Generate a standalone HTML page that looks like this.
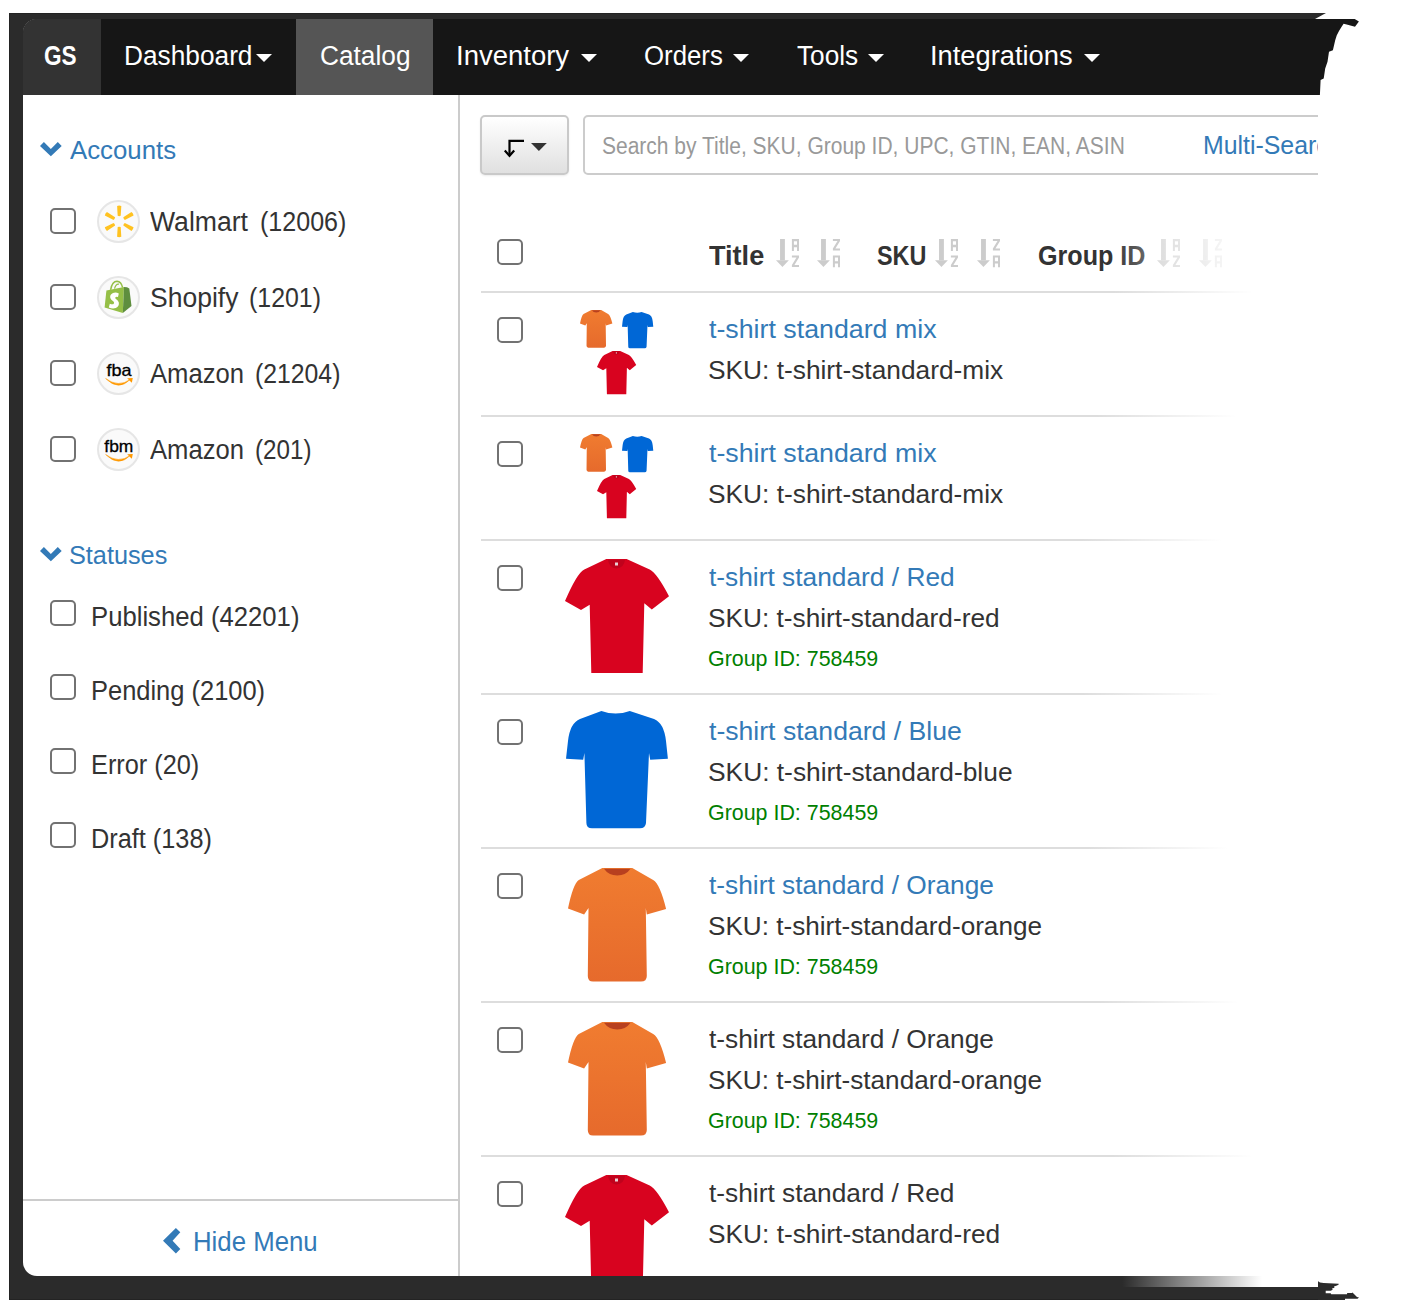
<!DOCTYPE html>
<html><head><meta charset="utf-8"><style>
html,body{margin:0;padding:0;}
body{width:1401px;height:1306px;position:relative;overflow:hidden;background:#fff;font-family:"Liberation Sans",sans-serif;}
.t{position:absolute;white-space:nowrap;transform-origin:0 0;}
.cb{position:absolute;border:2px solid #727272;border-radius:5px;background:#fff;}
.logo{position:absolute;width:39px;height:39px;border:2px solid #e6e6e6;border-radius:50%;background:#fafafa;}
.btn{position:absolute;border:2px solid #c9c9c9;border-radius:5px;background:linear-gradient(#fff,#e0e0e0);box-shadow:0 1px 2px rgba(0,0,0,.08);}
svg{overflow:visible}
</style></head><body>
<div style="position:absolute;left:9px;top:13px;width:1306px;height:1287px;background:#2b2b2b;box-shadow:inset 0 0 0 1px #232323"></div>
<div id="content" style="position:absolute;left:23px;top:19px;width:1295px;height:1257px;background:#fff;border-radius:14px 0 0 14px;overflow:hidden">
<div style="position:absolute;left:0;top:0;width:1295px;height:76px;background:#161616"></div>
<div style="position:absolute;left:0;top:0;width:78px;height:76px;background:#333"></div>
<div style="position:absolute;left:273px;top:0;width:137px;height:76px;background:#555"></div>
</div>
<svg width="0" height="0" style="position:absolute"><defs><linearGradient id="og" x1="0" y1="0" x2="0" y2="1"><stop offset="0" stop-color="#f07c30"/><stop offset="1" stop-color="#e66a2c"/></linearGradient></defs></svg>
<svg style="position:absolute;left:0;top:0" width="1401" height="1306">
<polygon fill="#2b2b2b" points="1300,13 1326,13 1315,19 1300,19"/>
<polygon fill="#161616" points="1300,19 1354.7,19 1358.9,21.5 1355,26.8 1351.3,25.7 1346.7,24.5 1343.6,23.8 1341.3,27.2 1339,31 1336.7,35.6 1335.2,40.2 1332.9,50.2 1329,51.7 1327.5,61.7 1325.2,68.6 1323.7,78.5 1320.6,80 1319.9,95 1300,95"/>
<polygon fill="#2b2b2b" points="1300,1276 1317.7,1276 1317.7,1281 1320,1282.5 1323.7,1283 1338.7,1283.7 1338.7,1284.5 1337,1285.5 1334,1286.5 1334.5,1287.7 1332,1288.5 1332.7,1289.7 1330.7,1290.7 1325.7,1290.7 1325.7,1293.2 1330.7,1293.2 1331.2,1294.2 1347,1294.2 1347.2,1293 1352.2,1293 1352.2,1292.2 1357,1297 1359,1297.5 1357.5,1298.7 1345,1298.7 1345,1300 1300,1300"/>
</svg>
<div class="t" id="t0" style="left:43.96px;top:43.22px;font-size:27px;line-height:27px;font-weight:700;color:#fff;transform:scaleX(0.8374);">GS</div>
<div class="t" id="t1" style="left:123.94px;top:42.88px;font-size:27px;line-height:27px;font-weight:400;color:#fff;transform:scaleX(0.9727);">Dashboard</div>
<div class="t" id="t2" style="left:319.97px;top:42.88px;font-size:27px;line-height:27px;font-weight:400;color:#fff;transform:scaleX(0.9727);">Catalog</div>
<div class="t" id="t3" style="left:455.97px;top:42.88px;font-size:27px;line-height:27px;font-weight:400;color:#fff;transform:scaleX(1.0182);">Inventory</div>
<div class="t" id="t4" style="left:643.79px;top:42.88px;font-size:27px;line-height:27px;font-weight:400;color:#fff;transform:scaleX(0.9555);">Orders</div>
<div class="t" id="t5" style="left:797.40px;top:42.88px;font-size:27px;line-height:27px;font-weight:400;color:#fff;transform:scaleX(0.9715);">Tools</div>
<div class="t" id="t6" style="left:930.36px;top:42.88px;font-size:27px;line-height:27px;font-weight:400;color:#fff;transform:scaleX(1.0108);">Integrations</div>
<svg style="position:absolute;left:256px;top:53.8px" width="16" height="8"><polygon fill="#fff" points="0,0 16,0 8.0,8"/></svg>
<svg style="position:absolute;left:580.5px;top:53.8px" width="16" height="8"><polygon fill="#fff" points="0,0 16,0 8.0,8"/></svg>
<svg style="position:absolute;left:732.8px;top:53.8px" width="16" height="8"><polygon fill="#fff" points="0,0 16,0 8.0,8"/></svg>
<svg style="position:absolute;left:868px;top:53.8px" width="16" height="8"><polygon fill="#fff" points="0,0 16,0 8.0,8"/></svg>
<svg style="position:absolute;left:1084px;top:53.8px" width="16" height="8"><polygon fill="#fff" points="0,0 16,0 8.0,8"/></svg>
<div style="position:absolute;left:458px;top:95px;width:2px;height:1181px;background:#ccc"></div>
<div style="position:absolute;left:23px;top:1199px;width:435px;height:2px;background:#ccc"></div>
<svg style="position:absolute;left:40px;top:141.6px" width="22" height="15"><polygon fill="#337ab7" points="0,3.9 3.9,0 10.85,6.9 17.8,0 21.7,3.9 10.85,14.2"/></svg>
<div class="t" id="t7" style="left:69.80px;top:136.93px;font-size:26px;line-height:26px;font-weight:400;color:#337ab7;transform:scaleX(0.9925);">Accounts</div>
<svg style="position:absolute;left:40px;top:546.6px" width="22" height="15"><polygon fill="#337ab7" points="0,3.9 3.9,0 10.85,6.9 17.8,0 21.7,3.9 10.85,14.2"/></svg>
<div class="t" id="t8" style="left:68.98px;top:541.67px;font-size:26px;line-height:26px;font-weight:400;color:#337ab7;transform:scaleX(0.9712);">Statuses</div>
<div class="cb" style="left:50px;top:208px;width:22px;height:22px"></div>
<div class="t" id="t9" style="left:150.40px;top:208.88px;font-size:27px;line-height:27px;font-weight:400;color:#333;transform:scaleX(0.9849);">Walmart</div>
<div class="t" id="t10" style="left:259.79px;top:208.88px;font-size:27px;line-height:27px;font-weight:400;color:#333;transform:scaleX(0.9281);">(12006)</div>
<div class="logo" style="left:96.5px;top:199.5px"></div>
<div class="cb" style="left:50px;top:284px;width:22px;height:22px"></div>
<div class="t" id="t11" style="left:149.99px;top:284.88px;font-size:27px;line-height:27px;font-weight:400;color:#333;transform:scaleX(0.9822);">Shopify</div>
<div class="t" id="t12" style="left:249.35px;top:284.88px;font-size:27px;line-height:27px;font-weight:400;color:#333;transform:scaleX(0.9216);">(1201)</div>
<div class="logo" style="left:96.5px;top:275.5px"></div>
<div class="cb" style="left:50px;top:360px;width:22px;height:22px"></div>
<div class="t" id="t13" style="left:150.40px;top:360.88px;font-size:27px;line-height:27px;font-weight:400;color:#333;transform:scaleX(0.9496);">Amazon</div>
<div class="t" id="t14" style="left:255.36px;top:360.88px;font-size:27px;line-height:27px;font-weight:400;color:#333;transform:scaleX(0.9177);">(21204)</div>
<div class="logo" style="left:96.5px;top:351.5px"></div>
<div class="cb" style="left:50px;top:436px;width:22px;height:22px"></div>
<div class="t" id="t15" style="left:150.40px;top:436.88px;font-size:27px;line-height:27px;font-weight:400;color:#333;transform:scaleX(0.9496);">Amazon</div>
<div class="t" id="t16" style="left:255.36px;top:436.88px;font-size:27px;line-height:27px;font-weight:400;color:#333;transform:scaleX(0.8962);">(201)</div>
<div class="logo" style="left:96.5px;top:427.5px"></div>
<svg style="position:absolute;left:96.5px;top:199.5px" width="43" height="43" viewBox="0 0 43 43"><g fill="#ffc220" transform="translate(22.2,21.4)"><path d="M-2.1,-15.4 Q0,-16.2 2.1,-15.4 L1.5,-5.6 Q0,-4.9 -1.5,-5.6 Z" transform="rotate(0)"/><path d="M-2.1,-15.4 Q0,-16.2 2.1,-15.4 L1.5,-5.6 Q0,-4.9 -1.5,-5.6 Z" transform="rotate(60)"/><path d="M-2.1,-15.4 Q0,-16.2 2.1,-15.4 L1.5,-5.6 Q0,-4.9 -1.5,-5.6 Z" transform="rotate(120)"/><path d="M-2.1,-15.4 Q0,-16.2 2.1,-15.4 L1.5,-5.6 Q0,-4.9 -1.5,-5.6 Z" transform="rotate(180)"/><path d="M-2.1,-15.4 Q0,-16.2 2.1,-15.4 L1.5,-5.6 Q0,-4.9 -1.5,-5.6 Z" transform="rotate(240)"/><path d="M-2.1,-15.4 Q0,-16.2 2.1,-15.4 L1.5,-5.6 Q0,-4.9 -1.5,-5.6 Z" transform="rotate(300)"/></g></svg>
<svg style="position:absolute;left:96.5px;top:275.5px" width="43" height="43" viewBox="0 0 43 43">
<path fill="none" stroke="#95bf47" stroke-width="1.5" d="M13.6,13.8 Q15.2,5.3 20,5.3 Q24.2,5.6 25.6,11.5"/>
<path fill="none" stroke="#95bf47" stroke-width="1.2" d="M17.5,12.6 Q19,7.5 22,8.2"/>
<path fill="#95bf47" d="M9.4,14.6 L27,11 L25.8,36.9 L7.6,31.6 Z"/>
<path fill="#5e8e3e" d="M27,11 L30,11.2 L32.3,12.4 L34.5,30 L25.8,36.9 Z"/>
<path fill="#fff" d="M21.8,17.4 Q19,15.9 16,16.9 Q12.5,18.4 13.3,21.9 Q13.9,23.9 16.2,25.3 Q17.6,26.3 16.8,27.7 Q15.6,28.9 12.8,27.7 L11.8,31.5 Q15.5,33.3 18.8,32.1 Q22.5,30.4 21.8,26.6 Q21.4,24.6 19,23.1 Q17.8,22.3 18.4,21.2 Q19.2,20.3 21,21.1 Z"/>
</svg>
<svg style="position:absolute;left:96.5px;top:351.5px" width="43" height="43" viewBox="0 0 43 43">
<text x="9.4" y="23.6" font-family="Liberation Sans" font-size="16.5" textLength="25.1" lengthAdjust="spacingAndGlyphs" fill="#000" stroke="#000" stroke-width="0.3">fba</text>
<path fill="#ff9900" stroke="#ff9900" stroke-width="0.5" d="M8.6,26.5 Q21.5,39.5 33.2,27.4 Q21.5,36 8.6,26.5 Z"/>
<path fill="#ff9900" d="M30.2,26.2 L35.8,26.1 L34.8,30.8 Z"/>
</svg>
<svg style="position:absolute;left:96.5px;top:427.5px" width="43" height="43" viewBox="0 0 43 43">
<text x="7.3" y="23.6" font-family="Liberation Sans" font-size="16.5" textLength="28.999999999999996" lengthAdjust="spacingAndGlyphs" fill="#000" stroke="#000" stroke-width="0.3">fbm</text>
<path fill="#ff9900" stroke="#ff9900" stroke-width="0.5" d="M8.6,26.5 Q21.5,39.5 33.2,27.4 Q21.5,36 8.6,26.5 Z"/>
<path fill="#ff9900" d="M30.2,26.2 L35.8,26.1 L34.8,30.8 Z"/>
</svg>
<div class="cb" style="left:50px;top:600.0px;width:22px;height:22px"></div>
<div class="t" id="t17" style="left:90.97px;top:604.28px;font-size:27px;line-height:27px;font-weight:400;color:#333;transform:scaleX(0.9512);">Published (42201)</div>
<div class="cb" style="left:50px;top:674.1px;width:22px;height:22px"></div>
<div class="t" id="t18" style="left:90.95px;top:678.28px;font-size:27px;line-height:27px;font-weight:400;color:#333;transform:scaleX(0.9429);">Pending (2100)</div>
<div class="cb" style="left:50px;top:748.2px;width:22px;height:22px"></div>
<div class="t" id="t19" style="left:90.94px;top:752.28px;font-size:27px;line-height:27px;font-weight:400;color:#333;transform:scaleX(0.9374);">Error (20)</div>
<div class="cb" style="left:50px;top:822.3px;width:22px;height:22px"></div>
<div class="t" id="t20" style="left:90.94px;top:826.28px;font-size:27px;line-height:27px;font-weight:400;color:#333;transform:scaleX(0.9370);">Draft (138)</div>
<svg style="position:absolute;left:162.9px;top:1227.5px" width="18" height="26"><polygon fill="#337ab7" points="12.9,0 17.3,4.3 9.6,12.7 17.3,21.1 12.9,25.4 0,12.7"/></svg>
<div class="t" id="t21" style="left:193.35px;top:1229.07px;font-size:27px;line-height:27px;font-weight:400;color:#337ab7;transform:scaleX(0.9546);">Hide Menu</div>
<div class="btn" style="left:480px;top:115px;width:85px;height:56px"></div>
<svg style="position:absolute;left:500px;top:136px" width="50" height="24">
<path fill="none" stroke="#000" stroke-width="2.2" d="M24,4.8 H9.5 V19.5"/>
<path fill="none" stroke="#000" stroke-width="2.2" d="M4.8,14.5 L9.5,19.8 L14.2,14.5"/>
<polygon fill="#333" points="31,7 46.8,7 38.9,15"/>
</svg>
<div style="position:absolute;left:583px;top:115px;width:800px;height:56px;border:2px solid #ccc;border-radius:5px;background:#fff"></div>
<div class="t" id="t22" style="left:601.59px;top:135.27px;font-size:23px;line-height:23px;font-weight:400;color:#999;transform:scaleX(0.9130);">Search by Title, SKU, Group ID, UPC, GTIN, EAN, ASIN</div>
<div class="t" id="t23" style="left:1202.76px;top:132.12px;font-size:26px;line-height:26px;font-weight:400;color:#337ab7;transform:scaleX(0.9560);">Multi-Search</div>
<div class="cb" style="left:497px;top:239.3px;width:22px;height:22px"></div>
<div class="t" id="t24" style="left:709.20px;top:242.88px;font-size:27px;line-height:27px;font-weight:700;color:#333;transform:scaleX(1.0037);">Title</div>
<div class="t" id="t25" style="left:877.39px;top:242.62px;font-size:27px;line-height:27px;font-weight:700;color:#333;transform:scaleX(0.8672);">SKU</div>
<div class="t" id="t26" style="left:1038.39px;top:242.62px;font-size:27px;line-height:27px;font-weight:700;color:#333;transform:scaleX(0.9300);">Group ID</div>
<svg style="position:absolute;left:775.9px;top:239px" width="24" height="28"><g fill="#ccc"><rect x="4.06" y="0" width="4.84" height="21.4"/><polygon points="0,21.2 12.85,21.2 6.47,27.9"/><path fill-rule="evenodd" d="M15.9,11.9 V0 H23 V11.9 H21 V8.2 H17.9 V11.9 Z M17.9,2.2 H21 V5.8 H17.9 Z"/><path d="M15.9,16.4 H23 V18.4 L18.4,25.9 H23 V27.9 H15.9 V25.9 L20.5,18.4 H15.9 Z"/></g></svg>
<svg style="position:absolute;left:817.3px;top:239px" width="24" height="28"><g fill="#ccc"><rect x="4.06" y="0" width="4.84" height="21.4"/><polygon points="0,21.2 12.85,21.2 6.47,27.9"/><path d="M15.9,0 H23 V2 L18.4,9.5 H23 V11.5 H15.9 V9.5 L20.5,2 H15.9 Z"/><path fill-rule="evenodd" d="M15.9,28.299999999999997 V16.4 H23 V28.299999999999997 H21 V24.599999999999998 H17.9 V28.299999999999997 Z M17.9,18.599999999999998 H21 V22.2 H17.9 Z"/></g></svg>
<svg style="position:absolute;left:934.7px;top:239px" width="24" height="28"><g fill="#ccc"><rect x="4.06" y="0" width="4.84" height="21.4"/><polygon points="0,21.2 12.85,21.2 6.47,27.9"/><path fill-rule="evenodd" d="M15.9,11.9 V0 H23 V11.9 H21 V8.2 H17.9 V11.9 Z M17.9,2.2 H21 V5.8 H17.9 Z"/><path d="M15.9,16.4 H23 V18.4 L18.4,25.9 H23 V27.9 H15.9 V25.9 L20.5,18.4 H15.9 Z"/></g></svg>
<svg style="position:absolute;left:976.7px;top:239px" width="24" height="28"><g fill="#ccc"><rect x="4.06" y="0" width="4.84" height="21.4"/><polygon points="0,21.2 12.85,21.2 6.47,27.9"/><path d="M15.9,0 H23 V2 L18.4,9.5 H23 V11.5 H15.9 V9.5 L20.5,2 H15.9 Z"/><path fill-rule="evenodd" d="M15.9,28.299999999999997 V16.4 H23 V28.299999999999997 H21 V24.599999999999998 H17.9 V28.299999999999997 Z M17.9,18.599999999999998 H21 V22.2 H17.9 Z"/></g></svg>
<svg style="position:absolute;left:1156.8px;top:239px" width="24" height="28"><g fill="#ccc"><rect x="4.06" y="0" width="4.84" height="21.4"/><polygon points="0,21.2 12.85,21.2 6.47,27.9"/><path fill-rule="evenodd" d="M15.9,11.9 V0 H23 V11.9 H21 V8.2 H17.9 V11.9 Z M17.9,2.2 H21 V5.8 H17.9 Z"/><path d="M15.9,16.4 H23 V18.4 L18.4,25.9 H23 V27.9 H15.9 V25.9 L20.5,18.4 H15.9 Z"/></g></svg>
<svg style="position:absolute;left:1198.7px;top:239px" width="24" height="28"><g fill="#ccc"><rect x="4.06" y="0" width="4.84" height="21.4"/><polygon points="0,21.2 12.85,21.2 6.47,27.9"/><path d="M15.9,0 H23 V2 L18.4,9.5 H23 V11.5 H15.9 V9.5 L20.5,2 H15.9 Z"/><path fill-rule="evenodd" d="M15.9,28.299999999999997 V16.4 H23 V28.299999999999997 H21 V24.599999999999998 H17.9 V28.299999999999997 Z M17.9,18.599999999999998 H21 V22.2 H17.9 Z"/></g></svg>
<div style="position:absolute;left:481px;top:291px;width:837px;height:2px;background:#ddd"></div>
<div style="position:absolute;left:481px;top:415px;width:837px;height:2px;background:#ddd"></div>
<div style="position:absolute;left:481px;top:539px;width:837px;height:2px;background:#ddd"></div>
<div style="position:absolute;left:481px;top:693px;width:837px;height:2px;background:#ddd"></div>
<div style="position:absolute;left:481px;top:847px;width:837px;height:2px;background:#ddd"></div>
<div style="position:absolute;left:481px;top:1001px;width:837px;height:2px;background:#ddd"></div>
<div style="position:absolute;left:481px;top:1155px;width:837px;height:2px;background:#ddd"></div>
<div class="cb" style="left:497px;top:317px;width:22px;height:22px"></div>
<div class="cb" style="left:497px;top:441px;width:22px;height:22px"></div>
<div class="cb" style="left:497px;top:565px;width:22px;height:22px"></div>
<div class="cb" style="left:497px;top:719px;width:22px;height:22px"></div>
<div class="cb" style="left:497px;top:873px;width:22px;height:22px"></div>
<div class="cb" style="left:497px;top:1027px;width:22px;height:22px"></div>
<div class="cb" style="left:497px;top:1181px;width:22px;height:22px"></div>
<svg style="position:absolute;left:579.7px;top:310.3px" width="33.4" height="38.7"><g transform="scale(0.33,0.332)"><path fill="url(#og)" d="M34.3,0 L64.3,0 L85.2,12 Q92,16 98.1,41 L78.8,46.5 L77.8,40 L78.8,108 Q78.8,113.5 73,113.5 L25,113.5 Q19.8,113.5 19.8,108 L20.5,40 L16.1,46.5 L0,40.6 Q5,16 10.8,12 Z"/><path d="M36,0.8 L62.5,0.8 Q58,7.5 49.3,7.5 Q40.5,7.5 36,0.8 Z" fill="#b8401f"/></g></svg>
<svg style="position:absolute;left:621.7px;top:311.6px" width="32.3" height="37.4"><g transform="scale(0.307,0.31)"><path fill="#0067d6" d="M35.4,0 Q49.6,5 63.8,0 L88,8 Q98,12 100,30 L101.9,47.7 L84.2,48.7 L83,42 L80,112 Q79.4,117.3 74,117.3 L26,117.3 Q20.4,117.3 20.4,112 L18.4,42 L17.2,48.7 L0,47.7 L2,30 Q4,12 14,8 Z"/></g></svg>
<svg style="position:absolute;left:597.3px;top:351.4px" width="40.2" height="44.2"><g transform="scale(0.377,0.379)"><path fill="#d8031f" d="M41.3,0 L61.6,0 L84.7,10.4 Q92,14 104,37.2 L86.8,50.6 L79.3,44.2 L77.7,113.9 L26.3,113.9 L24.7,45.8 L16,51.1 L0,42 Q12,14 19.3,10.4 Z"/><path d="M43,0.8 L60,0.8 Q59,9 51.5,9.5 Q44,9 43,0.8 Z" fill="#c0021c"/><rect x="50" y="3.5" width="3" height="3" fill="#e8d0d4"/></g></svg>
<svg style="position:absolute;left:579.7px;top:434.3px" width="33.4" height="38.7"><g transform="scale(0.33,0.332)"><path fill="url(#og)" d="M34.3,0 L64.3,0 L85.2,12 Q92,16 98.1,41 L78.8,46.5 L77.8,40 L78.8,108 Q78.8,113.5 73,113.5 L25,113.5 Q19.8,113.5 19.8,108 L20.5,40 L16.1,46.5 L0,40.6 Q5,16 10.8,12 Z"/><path d="M36,0.8 L62.5,0.8 Q58,7.5 49.3,7.5 Q40.5,7.5 36,0.8 Z" fill="#b8401f"/></g></svg>
<svg style="position:absolute;left:621.7px;top:435.6px" width="32.3" height="37.4"><g transform="scale(0.307,0.31)"><path fill="#0067d6" d="M35.4,0 Q49.6,5 63.8,0 L88,8 Q98,12 100,30 L101.9,47.7 L84.2,48.7 L83,42 L80,112 Q79.4,117.3 74,117.3 L26,117.3 Q20.4,117.3 20.4,112 L18.4,42 L17.2,48.7 L0,47.7 L2,30 Q4,12 14,8 Z"/></g></svg>
<svg style="position:absolute;left:597.3px;top:475.4px" width="40.2" height="44.2"><g transform="scale(0.377,0.379)"><path fill="#d8031f" d="M41.3,0 L61.6,0 L84.7,10.4 Q92,14 104,37.2 L86.8,50.6 L79.3,44.2 L77.7,113.9 L26.3,113.9 L24.7,45.8 L16,51.1 L0,42 Q12,14 19.3,10.4 Z"/><path d="M43,0.8 L60,0.8 Q59,9 51.5,9.5 Q44,9 43,0.8 Z" fill="#c0021c"/><rect x="50" y="3.5" width="3" height="3" fill="#e8d0d4"/></g></svg>
<svg style="position:absolute;left:565px;top:559.4px" width="105.0" height="115.0"><g transform="scale(1.0,1.0)"><path fill="#d8031f" d="M41.3,0 L61.6,0 L84.7,10.4 Q92,14 104,37.2 L86.8,50.6 L79.3,44.2 L77.7,113.9 L26.3,113.9 L24.7,45.8 L16,51.1 L0,42 Q12,14 19.3,10.4 Z"/><path d="M43,0.8 L60,0.8 Q59,9 51.5,9.5 Q44,9 43,0.8 Z" fill="#c0021c"/><rect x="50" y="3.5" width="3" height="3" fill="#e8d0d4"/></g></svg>
<svg style="position:absolute;left:566px;top:711.3px" width="103.0" height="118.3"><g transform="scale(1.0,1.0)"><path fill="#0067d6" d="M35.4,0 Q49.6,5 63.8,0 L88,8 Q98,12 100,30 L101.9,47.7 L84.2,48.7 L83,42 L80,112 Q79.4,117.3 74,117.3 L26,117.3 Q20.4,117.3 20.4,112 L18.4,42 L17.2,48.7 L0,47.7 L2,30 Q4,12 14,8 Z"/></g></svg>
<svg style="position:absolute;left:568.2px;top:868px" width="99.1" height="114.5"><g transform="scale(1.0,1.0)"><path fill="url(#og)" d="M34.3,0 L64.3,0 L85.2,12 Q92,16 98.1,41 L78.8,46.5 L77.8,40 L78.8,108 Q78.8,113.5 73,113.5 L25,113.5 Q19.8,113.5 19.8,108 L20.5,40 L16.1,46.5 L0,40.6 Q5,16 10.8,12 Z"/><path d="M36,0.8 L62.5,0.8 Q58,7.5 49.3,7.5 Q40.5,7.5 36,0.8 Z" fill="#b8401f"/></g></svg>
<svg style="position:absolute;left:568.2px;top:1022px" width="99.1" height="114.5"><g transform="scale(1.0,1.0)"><path fill="url(#og)" d="M34.3,0 L64.3,0 L85.2,12 Q92,16 98.1,41 L78.8,46.5 L77.8,40 L78.8,108 Q78.8,113.5 73,113.5 L25,113.5 Q19.8,113.5 19.8,108 L20.5,40 L16.1,46.5 L0,40.6 Q5,16 10.8,12 Z"/><path d="M36,0.8 L62.5,0.8 Q58,7.5 49.3,7.5 Q40.5,7.5 36,0.8 Z" fill="#b8401f"/></g></svg>
<svg style="position:absolute;left:565px;top:1175.4px" width="105.0" height="115.0"><g transform="scale(1.0,1.0)"><path fill="#d8031f" d="M41.3,0 L61.6,0 L84.7,10.4 Q92,14 104,37.2 L86.8,50.6 L79.3,44.2 L77.7,113.9 L26.3,113.9 L24.7,45.8 L16,51.1 L0,42 Q12,14 19.3,10.4 Z"/><path d="M43,0.8 L60,0.8 Q59,9 51.5,9.5 Q44,9 43,0.8 Z" fill="#c0021c"/><rect x="50" y="3.5" width="3" height="3" fill="#e8d0d4"/></g></svg>
<div class="t" id="t27" style="left:709.40px;top:316.12px;font-size:26px;line-height:26px;font-weight:400;color:#337ab7;transform:scaleX(1.0293);">t-shirt standard mix</div>
<div class="t" id="t28" style="left:708.40px;top:356.73px;font-size:26px;line-height:26px;font-weight:400;color:#333;transform:scaleX(1.0114);">SKU: t-shirt-standard-mix</div>
<div class="t" id="t29" style="left:709.40px;top:440.12px;font-size:26px;line-height:26px;font-weight:400;color:#337ab7;transform:scaleX(1.0293);">t-shirt standard mix</div>
<div class="t" id="t30" style="left:708.40px;top:480.73px;font-size:26px;line-height:26px;font-weight:400;color:#333;transform:scaleX(1.0114);">SKU: t-shirt-standard-mix</div>
<div class="t" id="t31" style="left:709.40px;top:564.12px;font-size:26px;line-height:26px;font-weight:400;color:#337ab7;transform:scaleX(1.0118);">t-shirt standard / Red</div>
<div class="t" id="t32" style="left:708.39px;top:604.72px;font-size:26px;line-height:26px;font-weight:400;color:#333;transform:scaleX(1.0090);">SKU: t-shirt-standard-red</div>
<div class="t" id="t33" style="left:708.39px;top:647.53px;font-size:22px;line-height:22px;font-weight:400;color:#008000;transform:scaleX(0.9733);">Group ID: 758459</div>
<div class="t" id="t34" style="left:709.40px;top:718.12px;font-size:26px;line-height:26px;font-weight:400;color:#337ab7;transform:scaleX(1.0229);">t-shirt standard / Blue</div>
<div class="t" id="t35" style="left:708.39px;top:758.72px;font-size:26px;line-height:26px;font-weight:400;color:#333;transform:scaleX(1.0132);">SKU: t-shirt-standard-blue</div>
<div class="t" id="t36" style="left:708.39px;top:801.53px;font-size:22px;line-height:22px;font-weight:400;color:#008000;transform:scaleX(0.9733);">Group ID: 758459</div>
<div class="t" id="t37" style="left:709.40px;top:872.12px;font-size:26px;line-height:26px;font-weight:400;color:#337ab7;transform:scaleX(1.0111);">t-shirt standard / Orange</div>
<div class="t" id="t38" style="left:708.39px;top:912.72px;font-size:26px;line-height:26px;font-weight:400;color:#333;transform:scaleX(1.0049);">SKU: t-shirt-standard-orange</div>
<div class="t" id="t39" style="left:708.39px;top:955.53px;font-size:22px;line-height:22px;font-weight:400;color:#008000;transform:scaleX(0.9733);">Group ID: 758459</div>
<div class="t" id="t40" style="left:709.40px;top:1026.12px;font-size:26px;line-height:26px;font-weight:400;color:#333;transform:scaleX(1.0111);">t-shirt standard / Orange</div>
<div class="t" id="t41" style="left:708.39px;top:1066.72px;font-size:26px;line-height:26px;font-weight:400;color:#333;transform:scaleX(1.0049);">SKU: t-shirt-standard-orange</div>
<div class="t" id="t42" style="left:708.39px;top:1109.53px;font-size:22px;line-height:22px;font-weight:400;color:#008000;transform:scaleX(0.9733);">Group ID: 758459</div>
<div class="t" id="t43" style="left:709.40px;top:1180.12px;font-size:26px;line-height:26px;font-weight:400;color:#333;transform:scaleX(1.0109);">t-shirt standard / Red</div>
<div class="t" id="t44" style="left:708.39px;top:1220.72px;font-size:26px;line-height:26px;font-weight:400;color:#333;transform:scaleX(1.0112);">SKU: t-shirt-standard-red</div>
<div style="position:absolute;left:460px;top:1276px;width:858px;height:24px;background:#2b2b2b;box-shadow:inset 0 -1px 0 #232323"></div>
<div style="position:absolute;left:1106px;top:195px;width:212px;height:12px;background:linear-gradient(to right,rgba(255,255,255,0),#fff 140px)"></div>
<div style="position:absolute;left:1107px;top:207px;width:211px;height:12px;background:linear-gradient(to right,rgba(255,255,255,0),#fff 140px)"></div>
<div style="position:absolute;left:1108px;top:219px;width:210px;height:12px;background:linear-gradient(to right,rgba(255,255,255,0),#fff 140px)"></div>
<div style="position:absolute;left:1109px;top:231px;width:209px;height:12px;background:linear-gradient(to right,rgba(255,255,255,0),#fff 140px)"></div>
<div style="position:absolute;left:1110px;top:243px;width:208px;height:12px;background:linear-gradient(to right,rgba(255,255,255,0),#fff 140px)"></div>
<div style="position:absolute;left:1111px;top:255px;width:207px;height:12px;background:linear-gradient(to right,rgba(255,255,255,0),#fff 140px)"></div>
<div style="position:absolute;left:1112px;top:267px;width:206px;height:12px;background:linear-gradient(to right,rgba(255,255,255,0),#fff 140px)"></div>
<div style="position:absolute;left:1113px;top:279px;width:205px;height:12px;background:linear-gradient(to right,rgba(255,255,255,0),#fff 140px)"></div>
<div style="position:absolute;left:1113px;top:291px;width:205px;height:12px;background:linear-gradient(to right,rgba(255,255,255,0),#fff 140px)"></div>
<div style="position:absolute;left:1112px;top:303px;width:206px;height:12px;background:linear-gradient(to right,rgba(255,255,255,0),#fff 140px)"></div>
<div style="position:absolute;left:1110px;top:315px;width:208px;height:12px;background:linear-gradient(to right,rgba(255,255,255,0),#fff 140px)"></div>
<div style="position:absolute;left:1108px;top:327px;width:210px;height:12px;background:linear-gradient(to right,rgba(255,255,255,0),#fff 140px)"></div>
<div style="position:absolute;left:1106px;top:339px;width:212px;height:12px;background:linear-gradient(to right,rgba(255,255,255,0),#fff 140px)"></div>
<div style="position:absolute;left:1105px;top:351px;width:213px;height:12px;background:linear-gradient(to right,rgba(255,255,255,0),#fff 140px)"></div>
<div style="position:absolute;left:1103px;top:363px;width:215px;height:12px;background:linear-gradient(to right,rgba(255,255,255,0),#fff 140px)"></div>
<div style="position:absolute;left:1101px;top:375px;width:217px;height:12px;background:linear-gradient(to right,rgba(255,255,255,0),#fff 140px)"></div>
<div style="position:absolute;left:1099px;top:387px;width:219px;height:12px;background:linear-gradient(to right,rgba(255,255,255,0),#fff 140px)"></div>
<div style="position:absolute;left:1098px;top:399px;width:220px;height:12px;background:linear-gradient(to right,rgba(255,255,255,0),#fff 140px)"></div>
<div style="position:absolute;left:1096px;top:411px;width:222px;height:12px;background:linear-gradient(to right,rgba(255,255,255,0),#fff 140px)"></div>
<div style="position:absolute;left:1094px;top:423px;width:224px;height:12px;background:linear-gradient(to right,rgba(255,255,255,0),#fff 140px)"></div>
<div style="position:absolute;left:1093px;top:435px;width:225px;height:12px;background:linear-gradient(to right,rgba(255,255,255,0),#fff 140px)"></div>
<div style="position:absolute;left:1092px;top:447px;width:226px;height:12px;background:linear-gradient(to right,rgba(255,255,255,0),#fff 140px)"></div>
<div style="position:absolute;left:1090px;top:459px;width:228px;height:12px;background:linear-gradient(to right,rgba(255,255,255,0),#fff 140px)"></div>
<div style="position:absolute;left:1089px;top:471px;width:229px;height:12px;background:linear-gradient(to right,rgba(255,255,255,0),#fff 140px)"></div>
<div style="position:absolute;left:1087px;top:483px;width:231px;height:12px;background:linear-gradient(to right,rgba(255,255,255,0),#fff 140px)"></div>
<div style="position:absolute;left:1086px;top:495px;width:232px;height:12px;background:linear-gradient(to right,rgba(255,255,255,0),#fff 140px)"></div>
<div style="position:absolute;left:1084px;top:507px;width:234px;height:12px;background:linear-gradient(to right,rgba(255,255,255,0),#fff 140px)"></div>
<div style="position:absolute;left:1083px;top:519px;width:235px;height:12px;background:linear-gradient(to right,rgba(255,255,255,0),#fff 140px)"></div>
<div style="position:absolute;left:1081px;top:531px;width:237px;height:12px;background:linear-gradient(to right,rgba(255,255,255,0),#fff 140px)"></div>
<div style="position:absolute;left:1081px;top:543px;width:237px;height:12px;background:linear-gradient(to right,rgba(255,255,255,0),#fff 140px)"></div>
<div style="position:absolute;left:1081px;top:555px;width:237px;height:12px;background:linear-gradient(to right,rgba(255,255,255,0),#fff 140px)"></div>
<div style="position:absolute;left:1081px;top:567px;width:237px;height:12px;background:linear-gradient(to right,rgba(255,255,255,0),#fff 140px)"></div>
<div style="position:absolute;left:1081px;top:579px;width:237px;height:12px;background:linear-gradient(to right,rgba(255,255,255,0),#fff 140px)"></div>
<div style="position:absolute;left:1081px;top:591px;width:237px;height:12px;background:linear-gradient(to right,rgba(255,255,255,0),#fff 140px)"></div>
<div style="position:absolute;left:1081px;top:603px;width:237px;height:12px;background:linear-gradient(to right,rgba(255,255,255,0),#fff 140px)"></div>
<div style="position:absolute;left:1082px;top:615px;width:236px;height:12px;background:linear-gradient(to right,rgba(255,255,255,0),#fff 140px)"></div>
<div style="position:absolute;left:1082px;top:627px;width:236px;height:12px;background:linear-gradient(to right,rgba(255,255,255,0),#fff 140px)"></div>
<div style="position:absolute;left:1082px;top:639px;width:236px;height:12px;background:linear-gradient(to right,rgba(255,255,255,0),#fff 140px)"></div>
<div style="position:absolute;left:1082px;top:651px;width:236px;height:12px;background:linear-gradient(to right,rgba(255,255,255,0),#fff 140px)"></div>
<div style="position:absolute;left:1082px;top:663px;width:236px;height:12px;background:linear-gradient(to right,rgba(255,255,255,0),#fff 140px)"></div>
<div style="position:absolute;left:1082px;top:675px;width:236px;height:12px;background:linear-gradient(to right,rgba(255,255,255,0),#fff 140px)"></div>
<div style="position:absolute;left:1082px;top:687px;width:236px;height:12px;background:linear-gradient(to right,rgba(255,255,255,0),#fff 140px)"></div>
<div style="position:absolute;left:1082px;top:699px;width:236px;height:12px;background:linear-gradient(to right,rgba(255,255,255,0),#fff 140px)"></div>
<div style="position:absolute;left:1083px;top:711px;width:235px;height:12px;background:linear-gradient(to right,rgba(255,255,255,0),#fff 140px)"></div>
<div style="position:absolute;left:1083px;top:723px;width:235px;height:12px;background:linear-gradient(to right,rgba(255,255,255,0),#fff 140px)"></div>
<div style="position:absolute;left:1084px;top:735px;width:234px;height:12px;background:linear-gradient(to right,rgba(255,255,255,0),#fff 140px)"></div>
<div style="position:absolute;left:1084px;top:747px;width:234px;height:12px;background:linear-gradient(to right,rgba(255,255,255,0),#fff 140px)"></div>
<div style="position:absolute;left:1084px;top:759px;width:234px;height:12px;background:linear-gradient(to right,rgba(255,255,255,0),#fff 140px)"></div>
<div style="position:absolute;left:1085px;top:771px;width:233px;height:12px;background:linear-gradient(to right,rgba(255,255,255,0),#fff 140px)"></div>
<div style="position:absolute;left:1085px;top:783px;width:233px;height:12px;background:linear-gradient(to right,rgba(255,255,255,0),#fff 140px)"></div>
<div style="position:absolute;left:1085px;top:795px;width:233px;height:12px;background:linear-gradient(to right,rgba(255,255,255,0),#fff 140px)"></div>
<div style="position:absolute;left:1086px;top:807px;width:232px;height:12px;background:linear-gradient(to right,rgba(255,255,255,0),#fff 140px)"></div>
<div style="position:absolute;left:1086px;top:819px;width:232px;height:12px;background:linear-gradient(to right,rgba(255,255,255,0),#fff 140px)"></div>
<div style="position:absolute;left:1087px;top:831px;width:231px;height:12px;background:linear-gradient(to right,rgba(255,255,255,0),#fff 140px)"></div>
<div style="position:absolute;left:1087px;top:843px;width:231px;height:12px;background:linear-gradient(to right,rgba(255,255,255,0),#fff 140px)"></div>
<div style="position:absolute;left:1088px;top:855px;width:230px;height:12px;background:linear-gradient(to right,rgba(255,255,255,0),#fff 140px)"></div>
<div style="position:absolute;left:1089px;top:867px;width:229px;height:12px;background:linear-gradient(to right,rgba(255,255,255,0),#fff 140px)"></div>
<div style="position:absolute;left:1090px;top:879px;width:228px;height:12px;background:linear-gradient(to right,rgba(255,255,255,0),#fff 140px)"></div>
<div style="position:absolute;left:1090px;top:891px;width:228px;height:12px;background:linear-gradient(to right,rgba(255,255,255,0),#fff 140px)"></div>
<div style="position:absolute;left:1091px;top:903px;width:227px;height:12px;background:linear-gradient(to right,rgba(255,255,255,0),#fff 140px)"></div>
<div style="position:absolute;left:1092px;top:915px;width:226px;height:12px;background:linear-gradient(to right,rgba(255,255,255,0),#fff 140px)"></div>
<div style="position:absolute;left:1093px;top:927px;width:225px;height:12px;background:linear-gradient(to right,rgba(255,255,255,0),#fff 140px)"></div>
<div style="position:absolute;left:1094px;top:939px;width:224px;height:12px;background:linear-gradient(to right,rgba(255,255,255,0),#fff 140px)"></div>
<div style="position:absolute;left:1095px;top:951px;width:223px;height:12px;background:linear-gradient(to right,rgba(255,255,255,0),#fff 140px)"></div>
<div style="position:absolute;left:1096px;top:963px;width:222px;height:12px;background:linear-gradient(to right,rgba(255,255,255,0),#fff 140px)"></div>
<div style="position:absolute;left:1096px;top:975px;width:222px;height:12px;background:linear-gradient(to right,rgba(255,255,255,0),#fff 140px)"></div>
<div style="position:absolute;left:1097px;top:987px;width:221px;height:12px;background:linear-gradient(to right,rgba(255,255,255,0),#fff 140px)"></div>
<div style="position:absolute;left:1098px;top:999px;width:220px;height:12px;background:linear-gradient(to right,rgba(255,255,255,0),#fff 140px)"></div>
<div style="position:absolute;left:1099px;top:1011px;width:219px;height:12px;background:linear-gradient(to right,rgba(255,255,255,0),#fff 140px)"></div>
<div style="position:absolute;left:1100px;top:1023px;width:218px;height:12px;background:linear-gradient(to right,rgba(255,255,255,0),#fff 140px)"></div>
<div style="position:absolute;left:1102px;top:1035px;width:216px;height:12px;background:linear-gradient(to right,rgba(255,255,255,0),#fff 140px)"></div>
<div style="position:absolute;left:1103px;top:1047px;width:215px;height:12px;background:linear-gradient(to right,rgba(255,255,255,0),#fff 140px)"></div>
<div style="position:absolute;left:1104px;top:1059px;width:214px;height:12px;background:linear-gradient(to right,rgba(255,255,255,0),#fff 140px)"></div>
<div style="position:absolute;left:1105px;top:1071px;width:213px;height:12px;background:linear-gradient(to right,rgba(255,255,255,0),#fff 140px)"></div>
<div style="position:absolute;left:1106px;top:1083px;width:212px;height:12px;background:linear-gradient(to right,rgba(255,255,255,0),#fff 140px)"></div>
<div style="position:absolute;left:1107px;top:1095px;width:211px;height:12px;background:linear-gradient(to right,rgba(255,255,255,0),#fff 140px)"></div>
<div style="position:absolute;left:1108px;top:1107px;width:210px;height:12px;background:linear-gradient(to right,rgba(255,255,255,0),#fff 140px)"></div>
<div style="position:absolute;left:1109px;top:1119px;width:209px;height:12px;background:linear-gradient(to right,rgba(255,255,255,0),#fff 140px)"></div>
<div style="position:absolute;left:1110px;top:1131px;width:208px;height:12px;background:linear-gradient(to right,rgba(255,255,255,0),#fff 140px)"></div>
<div style="position:absolute;left:1111px;top:1143px;width:207px;height:12px;background:linear-gradient(to right,rgba(255,255,255,0),#fff 140px)"></div>
<div style="position:absolute;left:1112px;top:1155px;width:206px;height:12px;background:linear-gradient(to right,rgba(255,255,255,0),#fff 140px)"></div>
<div style="position:absolute;left:1113px;top:1167px;width:205px;height:12px;background:linear-gradient(to right,rgba(255,255,255,0),#fff 140px)"></div>
<div style="position:absolute;left:1114px;top:1179px;width:204px;height:12px;background:linear-gradient(to right,rgba(255,255,255,0),#fff 140px)"></div>
<div style="position:absolute;left:1115px;top:1191px;width:203px;height:12px;background:linear-gradient(to right,rgba(255,255,255,0),#fff 140px)"></div>
<div style="position:absolute;left:1116px;top:1203px;width:202px;height:12px;background:linear-gradient(to right,rgba(255,255,255,0),#fff 140px)"></div>
<div style="position:absolute;left:1117px;top:1215px;width:201px;height:12px;background:linear-gradient(to right,rgba(255,255,255,0),#fff 140px)"></div>
<div style="position:absolute;left:1118px;top:1227px;width:200px;height:12px;background:linear-gradient(to right,rgba(255,255,255,0),#fff 140px)"></div>
<div style="position:absolute;left:1119px;top:1239px;width:199px;height:12px;background:linear-gradient(to right,rgba(255,255,255,0),#fff 140px)"></div>
<div style="position:absolute;left:1120px;top:1251px;width:198px;height:12px;background:linear-gradient(to right,rgba(255,255,255,0),#fff 140px)"></div>
<div style="position:absolute;left:1121px;top:1263px;width:197px;height:12px;background:linear-gradient(to right,rgba(255,255,255,0),#fff 140px)"></div>
<div style="position:absolute;left:1122px;top:1275px;width:196px;height:12px;background:linear-gradient(to right,rgba(255,255,255,0),#fff 140px)"></div>
<div style="position:absolute;left:1318px;top:95px;width:83px;height:1181px;background:#fff"></div>
</body></html>
